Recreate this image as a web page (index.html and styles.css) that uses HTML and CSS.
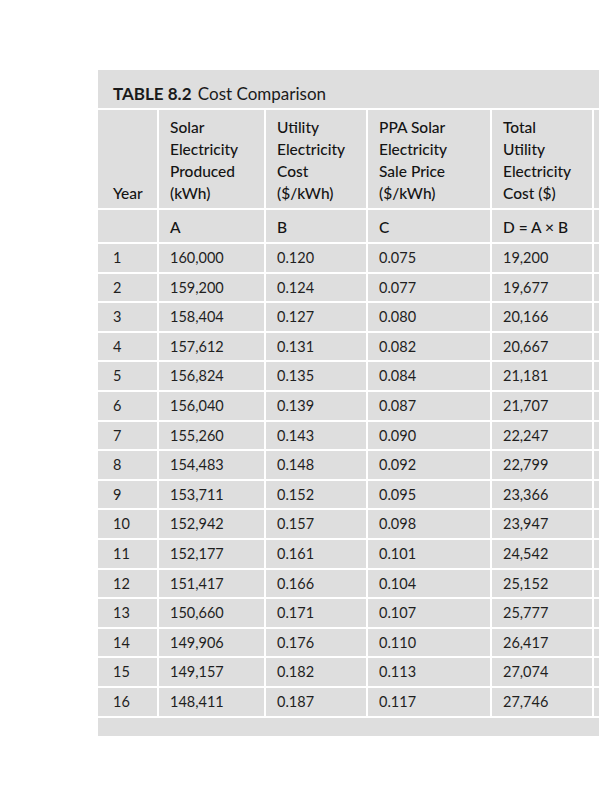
FILE: index.html
```html
<!DOCTYPE html>
<html>
<head>
<meta charset="utf-8">
<link rel="stylesheet" href="styles.css">
</head>
<body>
<div class="panel">
  <div class="caption"><span class="label">TABLE 8.2</span> Cost Comparison</div>
  <table class="data">
    <thead>
      <tr class="head">
        <th class="year">Year</th>
        <th>Solar<br>Electricity<br>Produced<br>(kWh)</th>
        <th>Utility<br>Electricity<br>Cost<br>($/kWh)</th>
        <th>PPA Solar<br>Electricity<br>Sale Price<br>($/kWh)</th>
        <th>Total<br>Utility<br>Electricity<br>Cost ($)</th>
        <th class="more"></th>
      </tr>
      <tr class="letters">
        <th class="year"></th>
        <th>A</th>
        <th>B</th>
        <th>C</th>
        <th>D = A × B</th>
        <th class="more"></th>
      </tr>
    </thead>
    <tbody>
      <tr><td class="year">1</td><td>160,000</td><td>0.120</td><td>0.075</td><td>19,200</td><td class="more"></td></tr>
      <tr><td class="year">2</td><td>159,200</td><td>0.124</td><td>0.077</td><td>19,677</td><td class="more"></td></tr>
      <tr><td class="year">3</td><td>158,404</td><td>0.127</td><td>0.080</td><td>20,166</td><td class="more"></td></tr>
      <tr><td class="year">4</td><td>157,612</td><td>0.131</td><td>0.082</td><td>20,667</td><td class="more"></td></tr>
      <tr><td class="year">5</td><td>156,824</td><td>0.135</td><td>0.084</td><td>21,181</td><td class="more"></td></tr>
      <tr><td class="year">6</td><td>156,040</td><td>0.139</td><td>0.087</td><td>21,707</td><td class="more"></td></tr>
      <tr><td class="year">7</td><td>155,260</td><td>0.143</td><td>0.090</td><td>22,247</td><td class="more"></td></tr>
      <tr><td class="year">8</td><td>154,483</td><td>0.148</td><td>0.092</td><td>22,799</td><td class="more"></td></tr>
      <tr><td class="year">9</td><td>153,711</td><td>0.152</td><td>0.095</td><td>23,366</td><td class="more"></td></tr>
      <tr><td class="year">10</td><td>152,942</td><td>0.157</td><td>0.098</td><td>23,947</td><td class="more"></td></tr>
      <tr><td class="year">11</td><td>152,177</td><td>0.161</td><td>0.101</td><td>24,542</td><td class="more"></td></tr>
      <tr><td class="year">12</td><td>151,417</td><td>0.166</td><td>0.104</td><td>25,152</td><td class="more"></td></tr>
      <tr><td class="year">13</td><td>150,660</td><td>0.171</td><td>0.107</td><td>25,777</td><td class="more"></td></tr>
      <tr><td class="year">14</td><td>149,906</td><td>0.176</td><td>0.110</td><td>26,417</td><td class="more"></td></tr>
      <tr><td class="year">15</td><td>149,157</td><td>0.182</td><td>0.113</td><td>27,074</td><td class="more"></td></tr>
      <tr><td class="year">16</td><td>148,411</td><td>0.187</td><td>0.117</td><td>27,746</td><td class="more"></td></tr>
    </tbody>
  </table>
</div>
</body>
</html>
```

FILE: styles.css
```css
html, body {
  margin: 0;
  padding: 0;
  background: #ffffff;
  overflow: hidden;
}

body {
  width: 599px;
  height: 800px;
  font-family: Lato, "Open Sans", sans-serif;
  color: #222222;
}

.panel {
  margin: 70px 0 0 98px;
  width: 620px;
  background: #dedede;
  padding-bottom: 18px;
}

.caption {
  padding: 14px 15px 4px;
  height: 20px;
  line-height: 20px;
  font-size: 17px;
  color: #1a1a1a;
}

.caption .label {
  font-weight: 700;
  margin-right: 2px;
}

.data {
  border-collapse: collapse;
  border-spacing: 0;
  width: 620px;
  table-layout: fixed;
}

.data th,
.data td {
  text-align: left;
  font-weight: 400;
  border-left: 2px solid #ffffff;
  border-top: 2px solid #ffffff;
  padding: 0 10px 0 11px;
  vertical-align: middle;
}

.data th.year,
.data td.year {
  border-left: none;
  padding-left: 15px;
  width: 34px;
}

.data tr.head th,
.data tr.letters th {
  font-size: 15.5px;
  font-weight: 500;
  color: #141414;
}

.data tr.head th {
  vertical-align: bottom;
  line-height: 22px;
  padding-top: 6px;
  padding-bottom: 4px;
}

.data tr.letters th {
  line-height: 22px;
  height: 22px;
  padding-top: 6px;
  padding-bottom: 4px;
}

.data th:nth-child(2) { width: 84px; }
.data th:nth-child(3) { width: 79px; }
.data th:nth-child(4) { width: 101px; }
.data th:nth-child(5) { width: 79px; }

.data td {
  font-size: 14.5px;
  line-height: 20px;
  height: 20px;
  padding-top: 4px;
  padding-bottom: 3.6px;
  color: #1f1f1f;
}

.data tbody tr:last-child td {
  border-bottom: 2px solid #ffffff;
}
```
